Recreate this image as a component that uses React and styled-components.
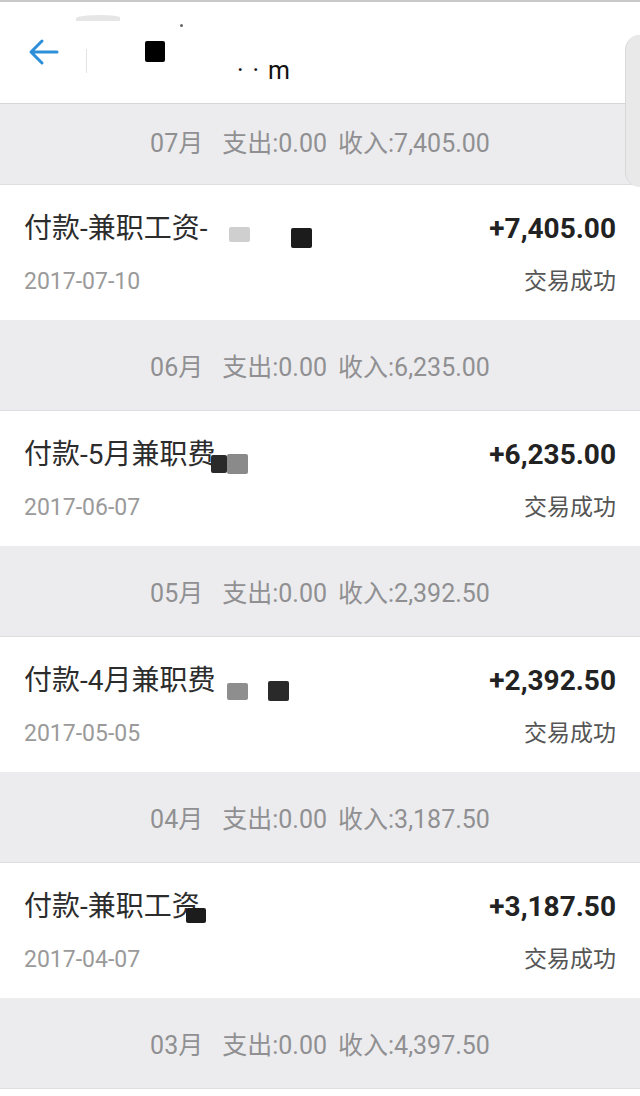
import React from 'react';
import styled, { createGlobalStyle } from 'styled-components';

const GlobalStyles = createGlobalStyle`
  html, body {
    margin: 0;
    padding: 0;
    background: #fff;
    font-family: Roboto, "Noto Sans CJK SC", sans-serif;
  }
  *, *::before, *::after { box-sizing: border-box; }
`;

const Page = styled.div`
  position: relative;
  width: 640px;
  min-height: 1096px;
  background: #fff;
  border-top: 2px solid #c9c9c9;
  overflow: hidden;
`;

// barra do topo
const NavBar = styled.div`
  position: relative;
  display: flex;
  align-items: center;
  height: 102px;
  padding-left: 28px;
  background: #fff;
  border-bottom: 1px solid #d6d6d8;
`;

const BackIcon = styled.svg`
  width: 31px;
  height: 28px;
  margin-top: -2px;
`;

const Divider = styled.div`
  width: 1px;
  height: 24px;
  margin-left: 27px;
  margin-top: 16px;
  background: #e3e3e3;
`;

// tarja de censura sobre o texto
const Redact = styled.span`
  display: inline-block;
  flex: none;
  width: ${p => p.w}px;
  height: ${p => p.h}px;
  background: ${p => p.c || '#111'};
  border-radius: 2px;
  margin-left: ${p => p.ml || 0}px;
  transform: translateY(${p => p.dy || 0}px);
`;

const NavSquare = styled(Redact)`
  align-self: flex-start;
  margin-top: 39px;
`;

const NavText = styled.span`
  align-self: flex-start;
  margin-top: 54px;
  margin-left: 72px;
  font-size: 25px;
  color: #111;
  letter-spacing: 9px;
`;

const Smudge = styled.div`
  position: absolute;
  left: 76px;
  top: 13px;
  width: 44px;
  height: 6px;
  background: #dcdcdc;
  border-radius: 80% 60% 0 0;
  opacity: 0.7;
`;

const Dot = styled.div`
  position: absolute;
  left: 180px;
  top: 22px;
  width: 3px;
  height: 3px;
  background: #666;
  border-radius: 50%;
`;

const EdgeShade = styled.div`
  position: absolute;
  right: 0;
  top: 33px;
  width: 15px;
  height: 152px;
  background: #e9e9ea;
  border-left: 1px solid #d8d8d8;
  border-radius: 16px 0 0 16px;
`;

// cabecalho do mes
const MonthBar = styled.div`
  display: flex;
  justify-content: center;
  align-items: center;
  height: ${p => (p.first ? 81 : 91)}px;
  padding-bottom: ${p => (p.first ? 6 : 0)}px;
  background: #ececee;
  border-bottom: 1px solid #dedee0;
  color: #909092;
  font-size: 25px;
`;

const MonthPart = styled.span`
  margin-left: ${p => p.gap || 0}px;
`;

const Item = styled.div`
  display: flex;
  flex-direction: column;
  gap: 21px;
  height: 135px;
  padding: 27px 24px 0 24px;
  background: #fff;
`;

const Line = styled.div`
  display: flex;
  justify-content: space-between;
  align-items: center;
`;

const Title = styled.div`
  display: flex;
  align-items: center;
  font-size: 28px;
  color: #2c2c2c;
  line-height: 34px;
`;

const Amount = styled.div`
  font-size: 28px;
  font-weight: 700;
  color: #222;
  line-height: 34px;
`;

const DateText = styled.div`
  font-size: 23px;
  color: #9a9a9a;
  line-height: 30px;
`;

const Status = styled.div`
  font-size: 23px;
  color: #555;
  line-height: 30px;
`;

const months = [
  {
    month: '07月', income: '7,405.00',
    title: '付款-兼职工资-',
    marks: [
      { w: 21, h: 15, c: '#cfcfcf', ml: 22, dy: 5 },
      { w: 21, h: 20, c: '#1c1c1c', ml: 41, dy: 9 },
    ],
    amount: '+7,405.00', date: '2017-07-10',
  },
  {
    month: '06月', income: '6,235.00',
    title: '付款-5月兼职费',
    marks: [
      { w: 16, h: 18, c: '#2a2a2a', ml: -4, dy: 9 },
      { w: 21, h: 20, c: '#8a8a8a', ml: 0, dy: 9 },
    ],
    amount: '+6,235.00', date: '2017-06-07',
  },
  {
    month: '05月', income: '2,392.50',
    title: '付款-4月兼职费',
    marks: [
      { w: 21, h: 17, c: '#8e8e8e', ml: 12, dy: 10 },
      { w: 21, h: 20, c: '#2a2a2a', ml: 20, dy: 10 },
    ],
    amount: '+2,392.50', date: '2017-05-05',
  },
  {
    month: '04月', income: '3,187.50',
    title: '付款-兼职工资',
    marks: [
      { w: 20, h: 15, c: '#1c1c1c', ml: -14, dy: 8 },
    ],
    amount: '+3,187.50', date: '2017-04-07',
  },
];

function MonthHeader({ month, income, first }) {
  return (
    <MonthBar first={first}>
      <MonthPart>{month}</MonthPart>
      <MonthPart gap={19}>支出:0.00</MonthPart>
      <MonthPart gap={11}>收入:{income}</MonthPart>
    </MonthBar>
  );
}

export default function App() {
  return (
    <>
      <GlobalStyles />
      <Page>
        <NavBar>
          <Smudge />
          <Dot />
          <BackIcon viewBox="0 0 31 28" fill="none" stroke="#2e8fd9" strokeWidth="3" strokeLinecap="round" strokeLinejoin="round">
            <path d="M29 14H3M14 3L3 14l11 11" />
          </BackIcon>
          <Divider />
          <NavSquare w={20} h={21} c="#000" ml={58} />
          <NavText>··m</NavText>
        </NavBar>

        {months.map((m, i) => (
          <React.Fragment key={m.month}>
            <MonthHeader month={m.month} income={m.income} first={i === 0} />
            <Item>
              <Line>
                <Title>
                  {m.title}
                  {m.marks.map((k, j) => (
                    <Redact key={j} {...k} />
                  ))}
                </Title>
                <Amount>{m.amount}</Amount>
              </Line>
              <Line>
                <DateText>{m.date}</DateText>
                <Status>交易成功</Status>
              </Line>
            </Item>
          </React.Fragment>
        ))}
        <MonthHeader month="03月" income="4,397.50" />

        <EdgeShade />
      </Page>
    </>
  );
}
